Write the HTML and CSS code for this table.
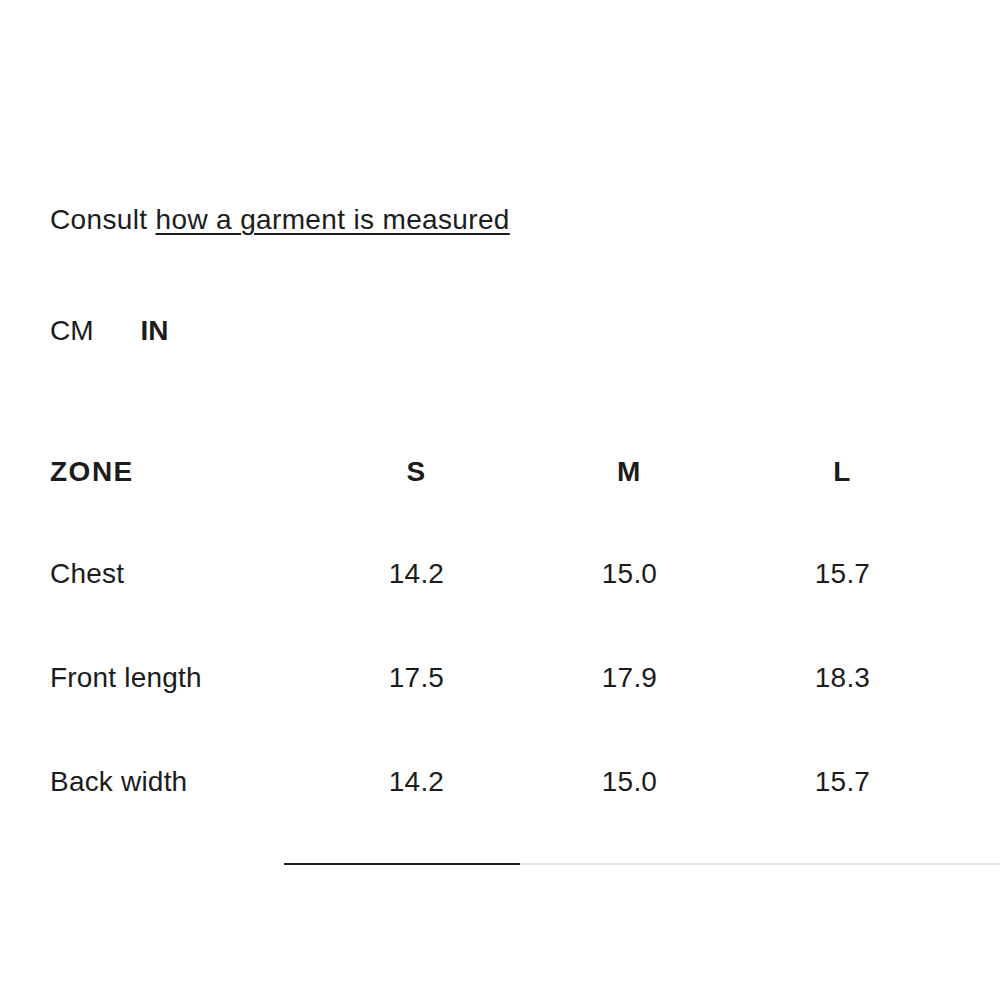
FILE: index.html
```html
<!DOCTYPE html>
<html lang="en">
<head>
<meta charset="utf-8">
<title>Size guide</title>
<link rel="stylesheet" href="styles.css">
</head>
<body>
<main class="guide">
  <p class="consult">Consult <a class="consult-link" href="#">how a garment is measured</a></p>
  <div class="units">
    <span class="unit">CM</span>
    <span class="unit unit-active">IN</span>
  </div>
  <div class="table-wrap">
    <table class="sizes">
      <thead>
        <tr><th class="zone">ZONE</th><th>S</th><th>M</th><th>L</th></tr>
      </thead>
      <tbody>
        <tr><td class="zone">Chest</td><td>14.2</td><td>15.0</td><td>15.7</td></tr>
        <tr><td class="zone">Front length</td><td>17.5</td><td>17.9</td><td>18.3</td></tr>
        <tr><td class="zone">Back width</td><td>14.2</td><td>15.0</td><td>15.7</td></tr>
      </tbody>
    </table>
  </div>
  <div class="scrollbar"><div class="scroll-thumb"></div></div>
</main>
</body>
</html>
```
FILE: styles.css
```css
html, body {
  margin: 0;
  padding: 0;
  background: #fff;
}
body {
  font-family: "Liberation Sans", Arial, sans-serif;
  color: #1c1c1c;
}
.guide {
  padding-top: 203px;
}
.consult {
  margin: 0 0 0 50px;
  font-size: 28px;
  line-height: 34px;
  letter-spacing: 0.35px;
}
.consult-link {
  color: #1c1c1c;
  text-decoration: underline;
  text-decoration-thickness: 2px;
  text-underline-offset: 4px;
}
.units {
  display: flex;
  gap: 47px;
  margin: 77px 0 0 50px;
  font-size: 28px;
  line-height: 34px;
}
.unit-active {
  font-weight: bold;
}
.table-wrap {
  margin-top: 73px;
  padding-left: 50px;
}
.sizes {
  border-collapse: collapse;
  font-size: 28px;
  letter-spacing: 0.2px;
}
.sizes th, .sizes td {
  width: 213px;
  text-align: center;
  padding: 0;
  height: 104px;
  line-height: 34px;
  vertical-align: middle;
}
.sizes thead th {
  height: 101px;
  font-weight: bold;
  letter-spacing: 1.5px;
}
.sizes .zone {
  width: 260px;
  text-align: left;
}
.scrollbar {
  margin: 29px 0 0 284px;
  height: 2px;
  background: #e8e8e8;
  display: flex;
}
.scroll-thumb {
  width: 236px;
  height: 2px;
  background: #1c1c1c;
}
```
